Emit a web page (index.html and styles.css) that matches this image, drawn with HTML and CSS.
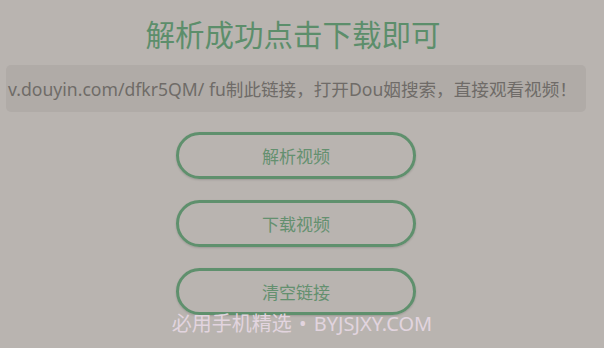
FILE: index.html
```html
<!DOCTYPE html>
<html lang="zh">
<head>
  <meta charset="UTF-8">
  <title>解析视频</title>
  <link rel="stylesheet" href="styles.css">
</head>
<body>

<div class="page">
  <div class="title">解析成功点击下载即可</div>

  <div class="link-box">
    <span class="link-text">v.douyin.com/dfkr5QM/ fu制此链接，打开Dou姻搜索，直接观看视频！</span>
  </div>

  <div class="button-list">
    <button class="pill-button">解析视频</button>
    <button class="pill-button">下载视频</button>
    <button class="pill-button">清空链接</button>
  </div>

  <div class="watermark">必用手机精选 • BYJSJXY.COM</div>
</div>

</body>
</html>
```

FILE: styles.css
```css
body {
  margin: 0;
  background-color: #b9b4b0;
  font-family: 'Noto Sans', 'Noto Sans CJK SC', sans-serif;
  overflow: hidden;
}

.page {
  width: 604px;
  height: 348px;
  display: flex;
  flex-direction: column;
  align-items: center;
}

.title {
  margin-top: 13px;
  margin-left: -18px;
  font-family: 'Noto Sans CJK SC', sans-serif;
  font-size: 29.5px;
  line-height: 40px;
  color: #5c8e6b;
}

.link-box {
  align-self: flex-start;
  margin-top: 12px;
  margin-left: 6px;
  width: 580px;
  height: 47px;
  background-color: #b0aba7;
  border-radius: 5px;
  display: flex;
  align-items: center;
  white-space: nowrap;
}

.link-text {
  padding-left: 2px;
  font-size: 17.6px;
  color: #6f6b68;
}

.button-list {
  margin-top: 20px;
  display: flex;
  flex-direction: column;
  gap: 21px;
}

.pill-button {
  width: 240px;
  height: 47px;
  border: 3px solid #5f906d;
  border-radius: 24px;
  background-color: transparent;
  box-shadow: 0 1px 2px rgba(0, 0, 0, 0.15);
  font-family: 'Noto Sans CJK SC', sans-serif;
  font-size: 17px;
  color: #64906f;
  padding: 0;
  margin-left: -12px;
}

.watermark {
  margin-top: -4px;
  margin-left: 0;
  font-size: 20px;
  line-height: 26px;
  color: #e2d4df;
  word-spacing: 2px;
}
```
